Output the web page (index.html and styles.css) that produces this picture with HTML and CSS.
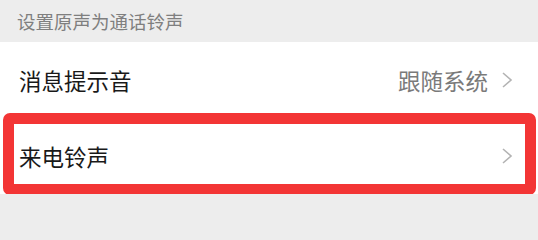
FILE: index.html
```html
<!DOCTYPE html>
<html lang="zh-CN">
<head>
<meta charset="utf-8">
<link rel="stylesheet" href="styles.css">
</head>
<body>
<div class="section-title">设置原声为通话铃声</div>
<div class="list">
  <div class="row">
    <span class="label">消息提示音</span>
    <span class="value">跟随系统</span>
    <svg class="chev" viewBox="0 0 12 16" width="12" height="16"><path d="M2 1 L10 8 L2 15" fill="none" stroke="#b3b3b3" stroke-width="1.6"/></svg>
  </div>
  <div class="row highlighted">
    <span class="label">来电铃声</span>
    <svg class="chev" viewBox="0 0 12 16" width="12" height="16"><path d="M2 1 L10 8 L2 15" fill="none" stroke="#b3b3b3" stroke-width="1.6"/></svg>
    <div class="mark"></div>
  </div>
</div>
</body>
</html>
```
FILE: styles.css
```css
html, body {
  margin: 0;
  padding: 0;
  background: #ededed;
  font-family: "Noto Sans CJK SC", "Noto Sans", sans-serif;
}
.section-title {
  height: 42px;
  line-height: 42px;
  padding-left: 17px;
  font-size: 18.5px;
  color: #7f7f7f;
  background: #ededed;
}
.list {
  background: #ffffff;
}
.row {
  position: relative;
  display: flex;
  align-items: center;
  height: 76px;
  padding: 0 25px 0 19px;
}
.label {
  flex: 1;
  font-size: 22.5px;
  color: #191919;
}
.value {
  font-size: 22.5px;
  color: #7a7a7a;
  margin-right: 13px;
}
.chev {
  display: block;
}
.mark {
  position: absolute;
  left: 3px;
  right: 2px;
  top: -5px;
  bottom: -1px;
  border: 11px solid #f33535;
  border-radius: 7px;
}
```
